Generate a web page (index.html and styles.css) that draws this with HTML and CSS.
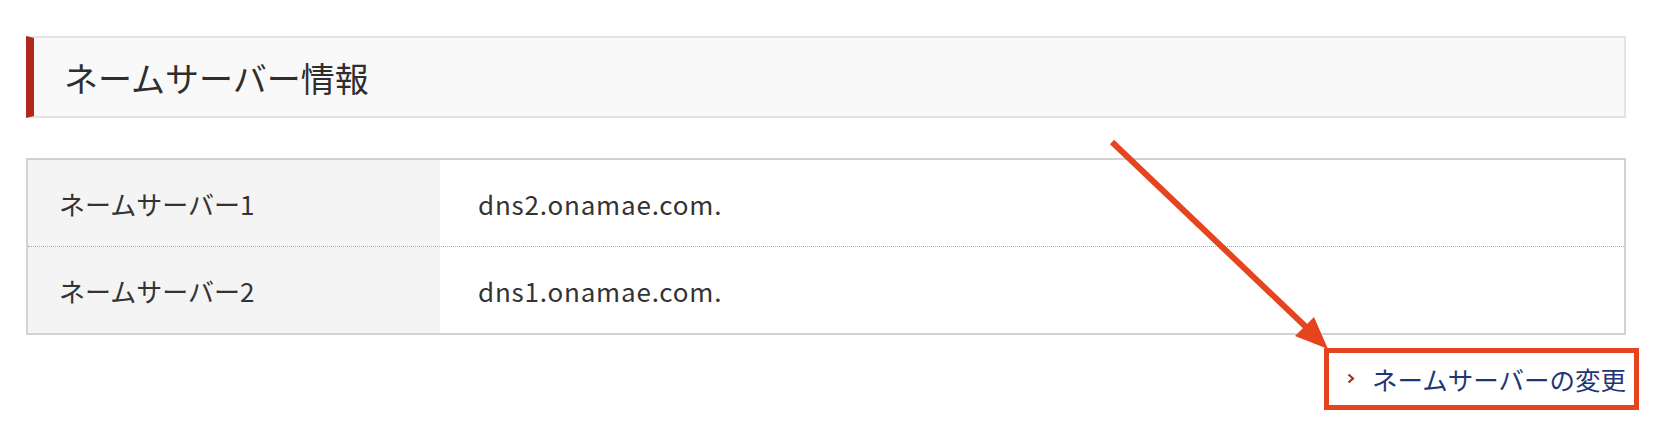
FILE: index.html
```html
<!DOCTYPE html>
<html lang="ja">
<head>
<meta charset="utf-8">
<link rel="stylesheet" href="styles.css">
</head>
<body>
<div class="page">
  <h2 class="section-title">ネームサーバー情報</h2>
  <div class="ns-table">
    <div class="ns-row">
      <div class="ns-label">ネームサーバー1</div>
      <div class="ns-value">dns2.onamae.com.</div>
    </div>
    <div class="ns-row">
      <div class="ns-label">ネームサーバー2</div>
      <div class="ns-value">dns1.onamae.com.</div>
    </div>
  </div>
  <div class="actions">
    <a class="change-link" href="#">
      <svg class="chev" width="8" height="11" viewBox="0 0 8 11"><path d="M1.5 1.5 L6 5.5 L1.5 9.5" fill="none" stroke="#b12a1c" stroke-width="2.2"/></svg>
      <span>ネームサーバーの変更</span>
      <span class="highlight"></span>
    </a>
  </div>
  <svg class="annot-arrow" width="1662" height="430" viewBox="0 0 1662 430">
    <line x1="1112" y1="142" x2="1306" y2="327" stroke="#e6441f" stroke-width="6"/>
    <polygon points="1328,349 1295,336 1314,317" fill="#e6441f"/>
  </svg>
</div>
</body>
</html>
```
FILE: styles.css
```css
html, body {
  margin: 0;
  padding: 0;
  background: #ffffff;
}
body {
  font-family: "Noto Sans CJK JP", "Noto Sans", sans-serif;
  color: #333333;
}
.page {
  position: relative;
  width: 1662px;
  height: 430px;
  box-sizing: border-box;
  padding: 36px 36px 0 26px;
}
.section-title {
  margin: 0;
  height: 78px;
  box-sizing: content-box;
  display: flex;
  align-items: center;
  padding-left: 30px;
  background: #f9f9f9;
  border: 2px solid #e4e4e4;
  border-left: 8px solid #b3261a;
  font-size: 34px;
  font-weight: 400;
  color: #2e2e2e;
  letter-spacing: 0;
}
.ns-table {
  margin-top: 40px;
  border: 2px solid #d2d2d2;
}
.ns-row {
  display: flex;
  height: 86px;
}
.ns-row + .ns-row {
  border-top: 1px dotted #a8a8a8;
}
.ns-label {
  width: 412px;
  flex: none;
  box-sizing: border-box;
  padding-left: 31px;
  background: #f4f4f4;
  display: flex;
  align-items: center;
  font-size: 26px;
  color: #333333;
}
.ns-value {
  flex: 1;
  padding-left: 38px;
  display: flex;
  align-items: center;
  font-size: 26px;
  letter-spacing: 0.8px;
  color: #333333;
}
.actions {
  display: flex;
  justify-content: flex-end;
  margin-top: 24px;
}
.change-link {
  position: relative;
  display: inline-flex;
  align-items: center;
  gap: 17px;
  font-size: 25.5px;
  line-height: 39px;
  color: #1f3675;
  text-decoration: none;
}
.chev {
  display: block;
}
.highlight {
  position: absolute;
  top: -11px;
  bottom: -12px;
  left: -23px;
  right: -13px;
  border: 5px solid #e6441f;
}
.annot-arrow {
  position: absolute;
  top: 0;
  left: 0;
  pointer-events: none;
}
```
